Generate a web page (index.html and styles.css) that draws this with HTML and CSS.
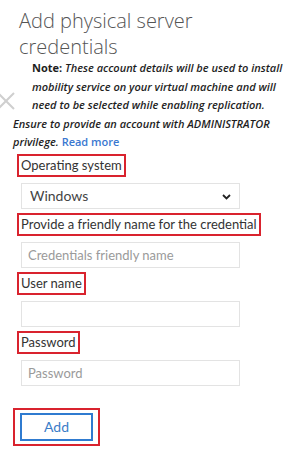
FILE: index.html
```html
<!DOCTYPE html>
<html lang="en">
<head>
    <meta charset="UTF-8">
    <meta name="viewport" content="width=device-width, initial-scale=1.0">
    <title>Add physical server credentials</title>
    <link rel="stylesheet" href="styles.css">
</head>
<body>
    <div class="panel">
        <h1 class="title">Add physical server<br>credentials</h1>
        <div class="note">
            <div class="note-head">
                <div class="close-slot">
                    <svg class="close-icon" width="18" height="18" viewBox="0 0 18 18">
                        <path d="M1 1 L17 17 M17 1 L1 17" stroke="#cfcfcf" stroke-width="2" fill="none"/>
                    </svg>
                </div>
                <p class="note-lines"><b class="note-label">Note:</b> These account details will be used to install<br>mobility service on your virtual machine and will<br>need to be selected while enabling replication.</p>
            </div>
            <p class="note-lines">Ensure to provide an account with ADMINISTRATOR<br>privilege. <a href="#" class="read-more">Read more</a></p>
        </div>
        <form class="form">
            <div class="field">
                <label class="mark" for="os">Operating system</label>
                <div class="select-wrap">
                    <select id="os" class="control">
                        <option>Windows</option>
                        <option>Linux</option>
                    </select>
                    <svg class="chevron" width="9" height="6" viewBox="0 0 9 6">
                        <path d="M1 1 L4.5 4.5 L8 1" stroke="#222" stroke-width="1.8" fill="none"/>
                    </svg>
                </div>
            </div>
            <div class="field">
                <label class="mark" for="friendly">Provide a friendly name for the credential</label>
                <input id="friendly" class="control" type="text" placeholder="Credentials friendly name">
            </div>
            <div class="field">
                <label class="mark" for="user">User name</label>
                <input id="user" class="control" type="text">
            </div>
            <div class="field">
                <label class="mark" for="pass">Password</label>
                <input id="pass" class="control" type="password" placeholder="Password">
            </div>
            <div class="actions">
                <div class="mark mark-button">
                    <button type="submit" class="add-button">Add</button>
                </div>
            </div>
        </form>
    </div>
</body>
</html>
```

FILE: styles.css
```css
body {
    margin: 0;
    padding: 0;
    background: #fff;
    font-family: 'Open Sans', 'Noto Sans', sans-serif;
    color: #333;
}

.panel {
    width: 306px;
    overflow: hidden;
}

.title {
    margin: 8px 0 0 19px;
    font-size: 20px;
    font-weight: 300;
    line-height: 26px;
    color: #555;
}

.note {
    margin: -1px 0 0 13px;
    font-size: 11px;
    line-height: 18.5px;
    font-style: italic;
    font-weight: 600;
    color: #1e1e1e;
}

.note-head {
    display: flex;
}

.close-slot {
    flex: none;
    width: 32px;
    margin-left: -13px;
}

.close-icon {
    display: block;
    margin: 33px 0 0 -3px;
}

.note-lines {
    margin: 0;
    white-space: nowrap;
}

.note-label {
    font-style: normal;
    font-weight: 700;
}

.read-more {
    font-style: normal;
    color: #3a78d0;
    text-decoration: none;
}

.form {
    margin: 2px 0 0 17px;
    font-family: Lato, 'Open Sans', sans-serif;
}

.field {
    display: flex;
    flex-direction: column;
    align-items: flex-start;
}

.mark {
    border: 2px solid #d9232e;
}

.field label {
    padding: 1px 2px;
    font-size: 13px;
    line-height: 17px;
    color: #333;
}

.select-wrap {
    position: relative;
    width: 219px;
    margin: 6px 0 4px 4px;
}

.control {
    display: block;
    box-sizing: border-box;
    width: 219px;
    height: 26px;
    margin: 6px 0 4px 4px;
    padding: 0 6px;
    border: 1px solid #e3e3e3;
    border-radius: 0;
    background: #fff;
    font-family: Lato, 'Open Sans', sans-serif;
    font-size: 13px;
    color: #333;
    outline: none;
}

.control::placeholder {
    color: #9a9a9a;
}

.select-wrap .control {
    margin: 0;
    padding-left: 8px;
    appearance: none;
    font-size: 14px;
    color: #444;
}

.chevron {
    position: absolute;
    right: 9px;
    top: 11px;
}

.actions {
    margin-top: 18px;
    margin-left: -4px;
}

.mark-button {
    display: inline-block;
    padding: 3px 5px;
}

.add-button {
    display: block;
    width: 73px;
    height: 28px;
    border: 2px solid #2f7bd0;
    background: #fff;
    font-family: Lato, 'Open Sans', sans-serif;
    font-size: 14px;
    color: #3b7dc8;
    cursor: pointer;
}
```
